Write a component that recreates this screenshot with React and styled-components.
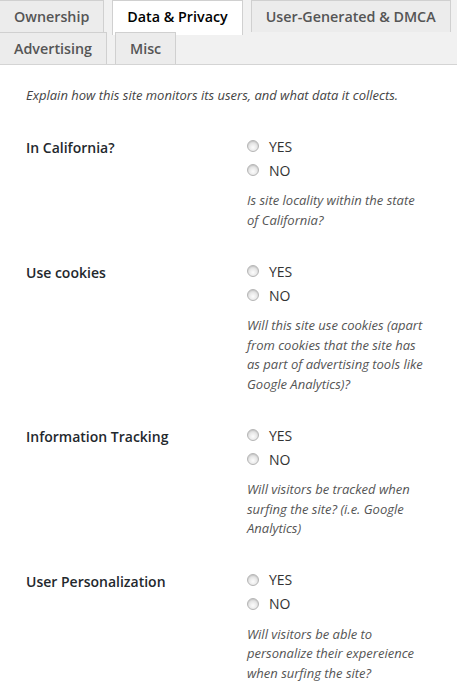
import React from 'react';
import styled, { createGlobalStyle } from 'styled-components';

const GlobalStyle = createGlobalStyle`
  html, body {
    margin: 0;
    padding: 0;
    background: #fff;
    overflow: hidden;
  }
  body {
    font-family: "Open Sans", "Liberation Sans", sans-serif;
    color: #444;
  }
`;

const Page = styled.div`
  width: 457px;
  height: 695px;
  overflow: hidden;
  background: #fff;
`;

const TabBar = styled.nav`
  display: flex;
  flex-wrap: wrap;
  align-items: flex-start;
  column-gap: 8px;
  margin-left: -1px;
  background: #f1f1f1;
  border-bottom: 1px solid #d4d4d4;
`;

const Tab = styled.a`
  box-sizing: border-box;
  height: ${(p) => (p.$active ? '35px' : '32px')};
  margin-bottom: ${(p) => (p.$active ? '-3px' : '0')};
  padding: 0 14px;
  border: 1px solid #d0d0d0;
  border-bottom: none;
  background: ${(p) => (p.$active ? '#fff' : '#ececec')};
  color: ${(p) => (p.$active ? '#000' : '#555')};
  font-size: 14.3px;
  font-weight: 600;
  line-height: 32px;
  white-space: nowrap;
  text-decoration: none;
  position: relative;
`;

const Content = styled.div`
  padding: 20px 26px 0;
`;

const Intro = styled.p`
  margin: 0 0 29px;
  font-size: 13px;
  font-style: italic;
  line-height: 20px;
  color: #444;
`;

const FieldRow = styled.div`
  display: grid;
  grid-template-columns: 221px 1fr;
  padding-bottom: 29px;
`;

const Label = styled.div`
  padding-top: 2px;
  font-size: 14px;
  font-weight: 600;
  line-height: 24px;
  color: #23282d;
`;

const Options = styled.div`
  display: flex;
  flex-direction: column;
  padding-right: 6px;
`;

const Option = styled.label`
  display: flex;
  align-items: center;
  gap: 10px;
  height: 24px;
  font-size: 14px;
  color: #333;
`;

const Radio = styled.span`
  box-sizing: border-box;
  width: 12px;
  height: 12px;
  border-radius: 50%;
  border: 1px solid #b5b5b5;
  background: radial-gradient(circle at 50% 65%, #fdfdfd 0%, #e9e9e9 45%, #c9c9c9 100%);
  box-shadow: inset 0 1px 1px rgba(0, 0, 0, 0.08);
`;

const Description = styled.p`
  margin: 9px 0 0;
  font-size: 13px;
  font-style: italic;
  line-height: 19.5px;
  color: #555;
`;

const fields = [
  {
    label: 'In California?',
    help: 'Is site locality within the state of California?',
  },
  {
    label: 'Use cookies',
    help: 'Will this site use cookies (apart from cookies that the site has as part of advertising tools like Google Analytics)?',
  },
  {
    label: 'Information Tracking',
    help: 'Will visitors be tracked when surfing the site? (i.e. Google Analytics)',
  },
  {
    label: 'User Personalization',
    help: 'Will visitors be able to personalize their expereience when surfing the site?',
  },
];

const tabs = ['Ownership', 'Data & Privacy', 'User-Generated & DMCA', 'Advertising', 'Misc'];

const App = () => (
  <Page>
    <GlobalStyle />
    <TabBar>
      {tabs.map((t) => (
        <Tab key={t} $active={t === 'Data & Privacy'}>
          {t}
        </Tab>
      ))}
    </TabBar>
    <Content>
      <Intro>Explain how this site monitors its users, and what data it collects.</Intro>
      {fields.map((f) => (
        <FieldRow key={f.label}>
          <Label>{f.label}</Label>
          <Options>
            <Option>
              <Radio />
              YES
            </Option>
            <Option>
              <Radio />
              NO
            </Option>
            <Description>{f.help}</Description>
          </Options>
        </FieldRow>
      ))}
    </Content>
  </Page>
);

export default App;
